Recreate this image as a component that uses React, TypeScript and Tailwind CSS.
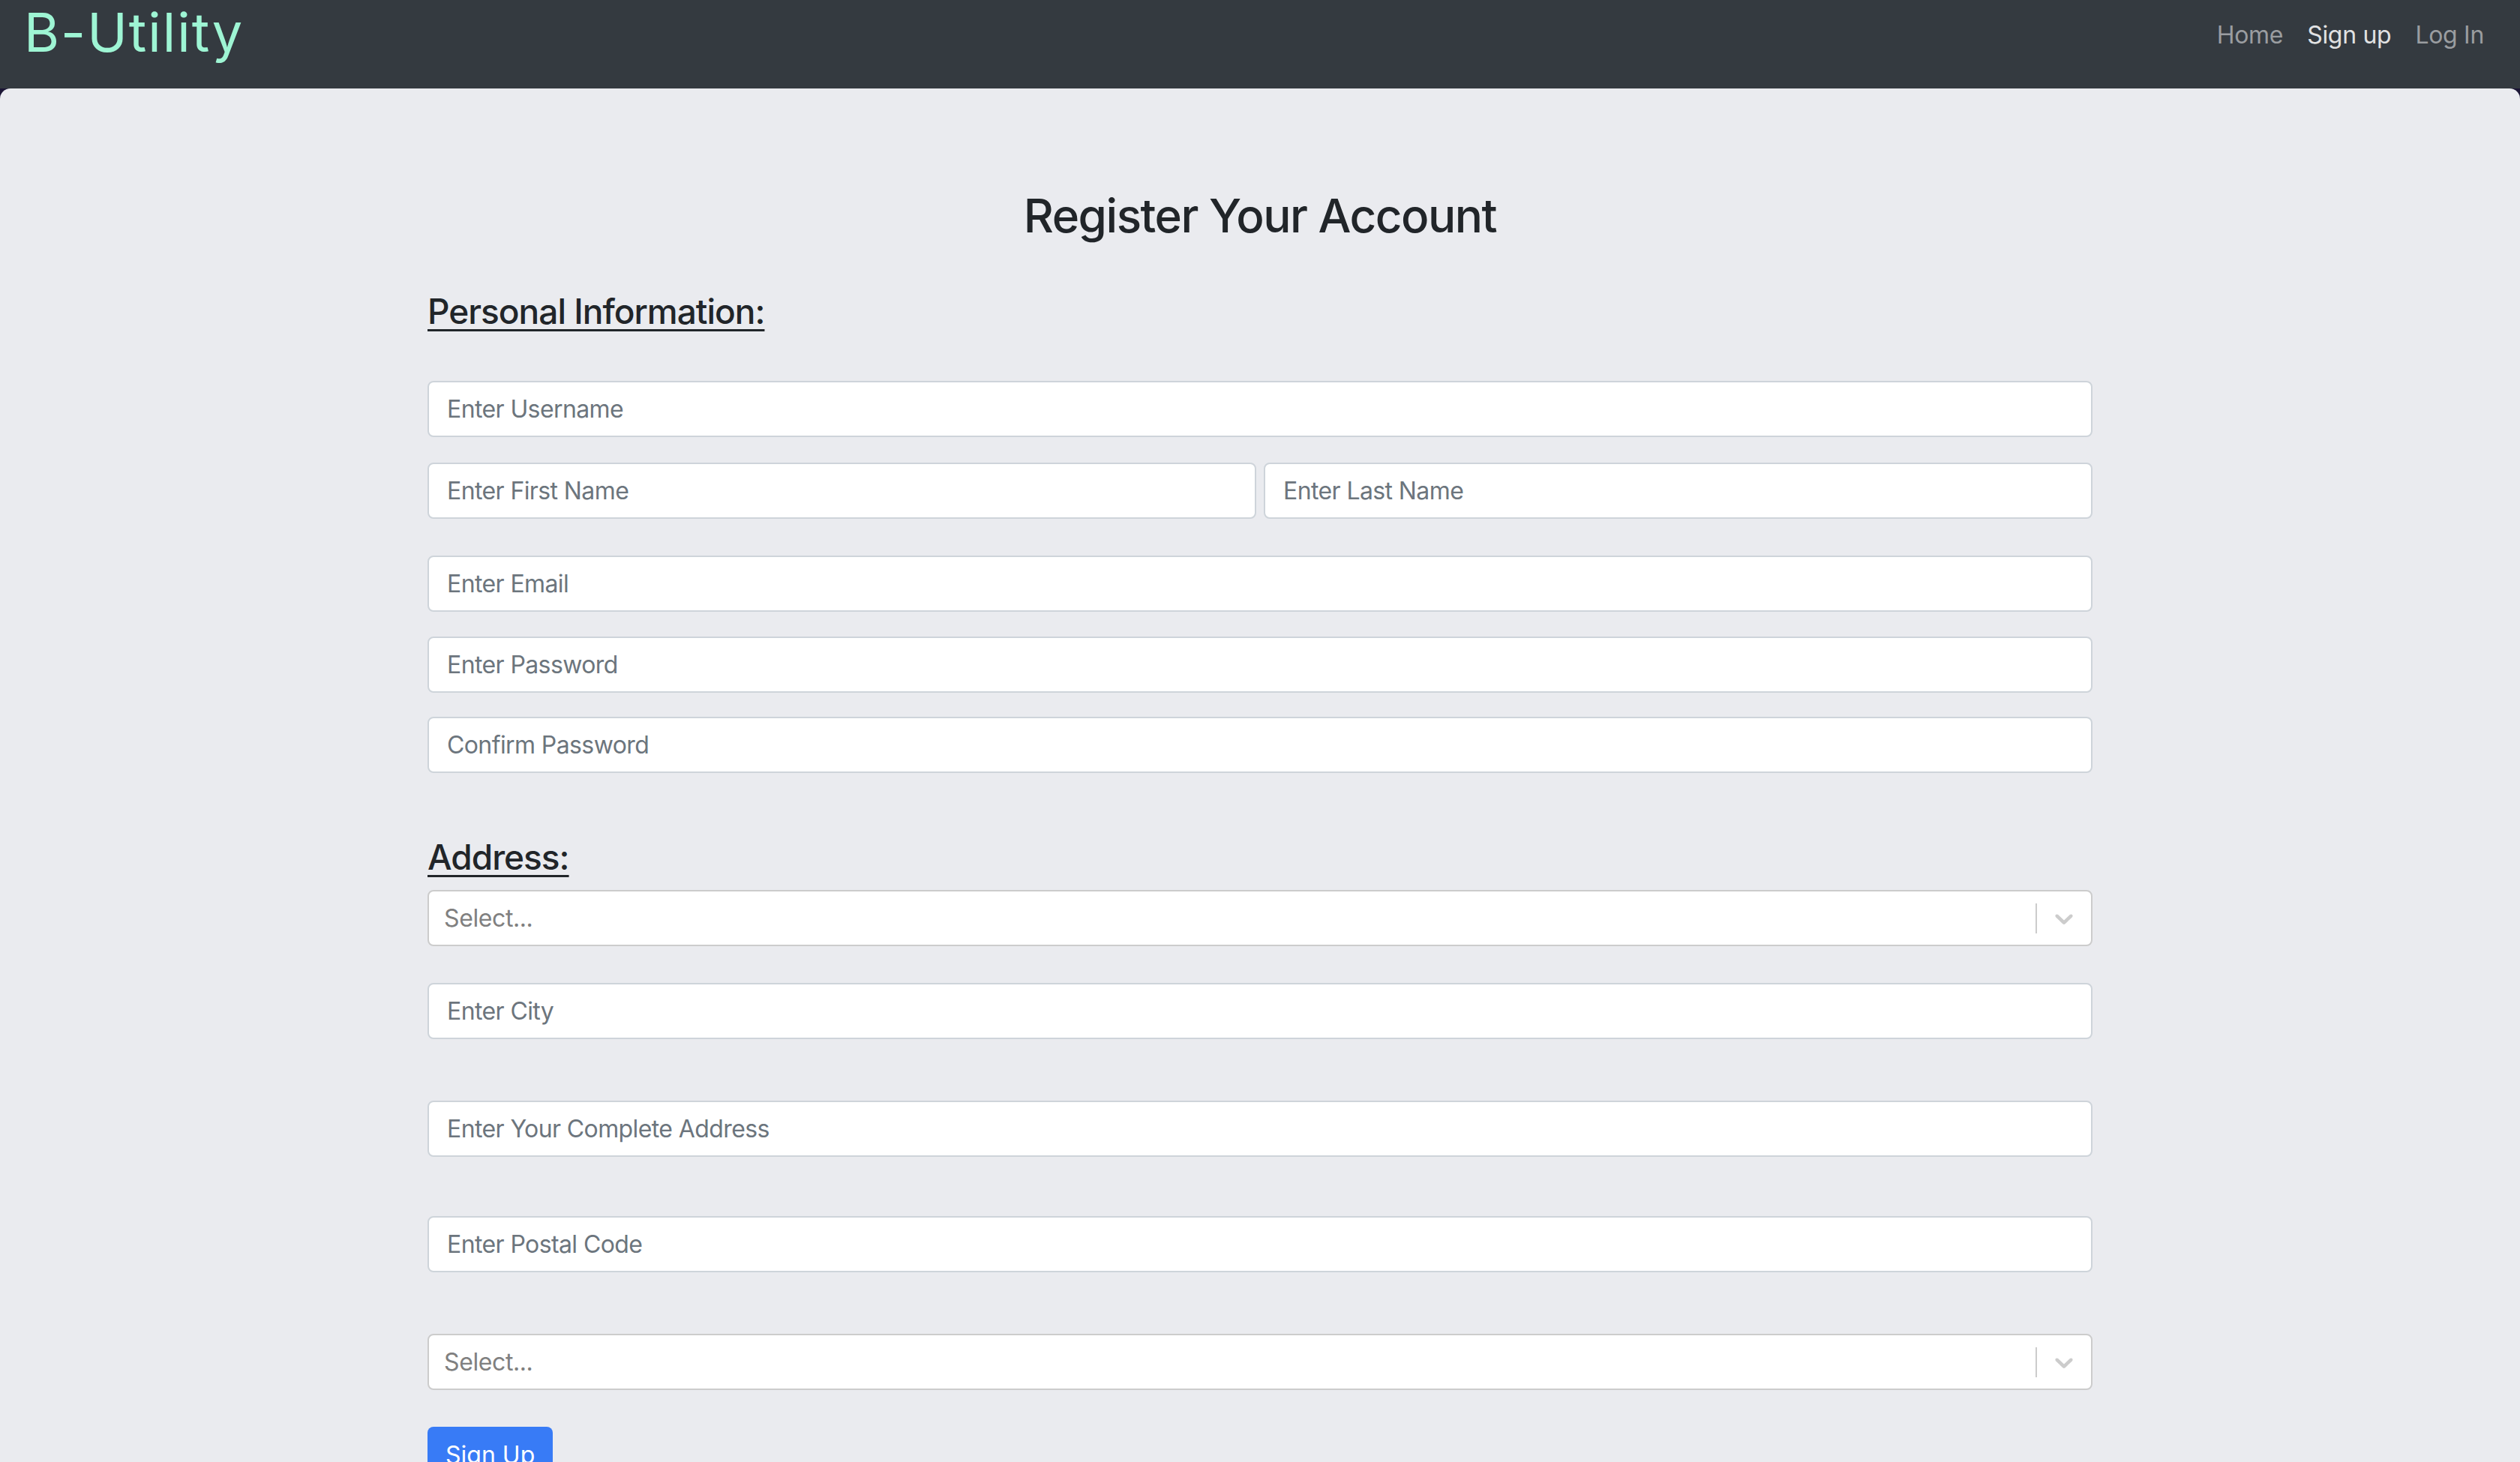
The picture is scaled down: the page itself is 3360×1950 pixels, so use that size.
import React from "react";

const font = { fontFamily: "Inter, 'Noto Sans', sans-serif" };

const inputCls =
  "block w-full h-[75px] rounded-[8px] border-2 border-[#ced4da] bg-white px-[24px] text-[32px] tracking-[-0.6px] text-[#495057] placeholder:text-[#6c757d] outline-none";

function Field({ placeholder, type = "text", className = "" }: { placeholder: string; type?: string; className?: string }) {
  return (
    <div className={className}>
      <input type={type} placeholder={placeholder} className={inputCls} />
    </div>
  );
}

function SelectBox({ className = "" }: { className?: string }) {
  return (
    <div className={className}>
      <div className="flex h-[75px] items-center rounded-[8px] border-2 border-[#cccccc] bg-white">
        <div className="flex-1 pl-[20px] text-[32px] tracking-[-0.4px] text-[#808080]">Select...</div>
        <span className="h-[40px] w-[2px] bg-[#cccccc]" />
        <div className="p-[16px] text-[#cccccc]">
          <svg viewBox="0 0 20 20" width="40" height="40" fill="currentColor">
            <path d="M4.516 7.548c0.436-0.446 1.043-0.481 1.576 0l3.908 3.747 3.908-3.747c0.533-0.481 1.141-0.446 1.574 0 0.436 0.445 0.408 1.197 0 1.615-0.406 0.418-4.695 4.502-4.695 4.502-0.217 0.223-0.502 0.335-0.787 0.335s-0.57-0.112-0.789-0.335c0 0-4.287-4.084-4.695-4.502s-0.436-1.17 0-1.615z" />
          </svg>
        </div>
      </div>
    </div>
  );
}

function Navbar() {
  return (
    <div className="flex h-[118px] items-start justify-between bg-[#343a40] px-[32px]">
      <a className="pt-[3px] text-[72px] leading-[80px] tracking-[2px] text-[#9ef5d4]">B-Utility</a>
      <nav className="mt-[23px] flex text-[32px] leading-[48px] tracking-[-0.3px]">
        <a className="px-[16px] text-[#9a9da0]">Home</a>
        <a className="px-[16px] text-[#e1e2e3]">Sign up</a>
        <a className="px-[16px] text-[#9a9da0]">Log In</a>
      </nav>
    </div>
  );
}

export default function App() {
  return (
    <div className="min-h-screen bg-[#1b1535]" style={font}>
      {/* Top bar */}
      <Navbar />

      {/* Main panel */}
      <div className="rounded-t-[14px] bg-[#eaebef] pt-[131px] pb-[120px]">
        <div className="mx-auto w-[2220px]">
          <h2 className="text-center text-[62px] font-medium leading-[77px] tracking-[-1.5px] text-[#212529]">
            Register Your Account
          </h2>

          <h4 className="mt-[60px] text-[46px] font-medium leading-[58px] tracking-[-1px] text-[#212529] underline decoration-[3px] underline-offset-[7px]">
            Personal Information:
          </h4>

          <form className="mt-[64px]">
            <Field placeholder="Enter Username" className="mb-[34px]" />
            <div className="mb-[49px] grid grid-cols-2 gap-[10px]">
              <Field placeholder="Enter First Name" />
              <Field placeholder="Enter Last Name" />
            </div>
            <Field placeholder="Enter Email" type="email" className="mb-[33px]" />
            <Field placeholder="Enter Password" type="password" className="mb-[32px]" />
            <Field placeholder="Confirm Password" type="password" />

            <h4 className="mt-[83px] text-[46px] font-medium leading-[58px] tracking-[-1px] text-[#212529] underline decoration-[3px] underline-offset-[7px]">
              Address:
            </h4>

            <SelectBox className="mt-[15px] mb-[49px]" />
            <Field placeholder="Enter City" className="mb-[82px]" />
            <Field placeholder="Enter Your Complete Address" className="mb-[79px]" />
            <Field placeholder="Enter Postal Code" className="mb-[82px]" />
            <SelectBox className="mb-[49px]" />

            <button
              type="button"
              className="h-[76px] rounded-[8px] bg-[#387bf6] px-[24px] text-[32px] text-white"
            >
              Sign Up
            </button>
          </form>
        </div>
      </div>
    </div>
  );
}
